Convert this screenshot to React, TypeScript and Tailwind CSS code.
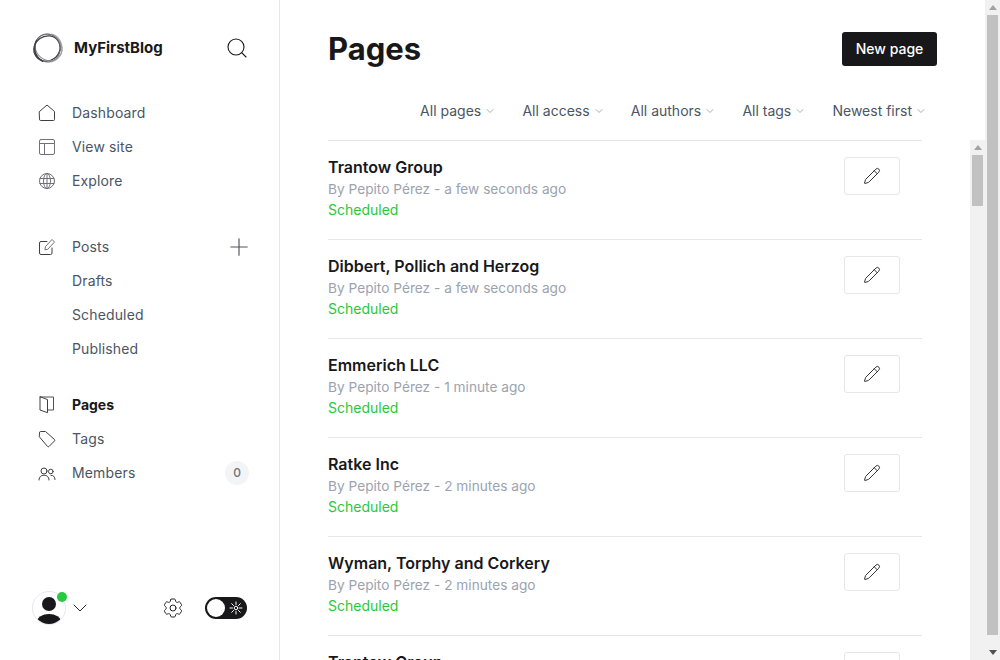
import React from "react";
import { Search, Plus, ChevronDown, Pencil } from "lucide-react";
import { HiOutlineCog6Tooth } from "react-icons/hi2";

const Svg = ({ children, size = 18 }: { children: React.ReactNode; size?: number }) => (
  <svg width={size} height={size} viewBox="0 0 18 18" fill="none" stroke="#3f3f46" strokeWidth="1" strokeLinejoin="round" strokeLinecap="round">
    {children}
  </svg>
);

const HomeIcon = () => <Svg><path d="M1.5 7.5 L9 1 L16.5 7.5 V15.5 a1 1 0 0 1 -1 1 H2.500 a1 1 0 0 1 -1 -1 Z" /></Svg>;
const LayoutIcon = () => <Svg><rect x="1.500" y="1.500" width="15" height="15" rx="1.500" stroke="#71717a" /><path d="M1.500 5.500 H16.500 M6.500 5.500 V16.500" stroke="#71717a" /></Svg>;
const GlobeIcon = () => <Svg><g stroke="#71717a"><circle cx="9" cy="9" r="7.500" /><ellipse cx="9" cy="9" rx="3.500" ry="7.500" /><path d="M2 6.500 H16 M2 11.500 H16 M9 1.500 V16.500" /></g></Svg>;
const PostIcon = () => <Svg><path d="M9 3.500 H3 a1.500 1.500 0 0 0 -1.500 1.500 V15 a1.500 1.500 0 0 0 1.500 1.500 H12.500 a1.500 1.500 0 0 0 1.500 -1.500 V10" /><path d="M7 11.500 L7.500 8.500 L14 1.500 L16.500 4 L10 11 Z" stroke="#71717a" /></Svg>;
const BookIcon = () => <Svg><path d="M2 1 H15.500 V14 H9.500" stroke="#52525b" /><path d="M2 1 V14 L9.500 16.700 V4 Z" /></Svg>;
const TagIcon = () => <Svg><path d="M1.500 2.500 a1 1 0 0 1 1 -1 H7.500 L16.500 9.500 a1 1 0 0 1 0 1.400 L11 16.500 a1 1 0 0 1 -1.400 0 L1.500 7 Z" /></Svg>;
const UsersIcon = () => <Svg><circle cx="6" cy="7" r="3" /><path d="M1 16 C1 12.500 3.500 11.300 6 11.300 C8.500 11.300 11 12.500 11 16" /><circle cx="12.800" cy="7.500" r="2.300" /><path d="M13 11.300 C15.500 11.300 17 12.800 17 15.500" /></Svg>;

const SunIcon = () => (
  <svg width="14" height="14" viewBox="0 0 14 14" fill="none" stroke="#ffffff" strokeWidth="1" strokeLinecap="round">
    <circle cx="7" cy="7" r="1.800" />
    <path d="M7 1 V3.500 M7 10.500 V13 M1 7 H3.500 M10.500 7 H13 M2.700 2.700 L4.500 4.500 M9.500 9.500 L11.300 11.300 M2.700 11.300 L4.500 9.500 M9.500 4.500 L11.300 2.700" />
  </svg>
);

const Logo = () => (
  <svg width="32" height="32" viewBox="0 0 32 32" fill="none">
    <ellipse cx="15" cy="16.500" rx="13.500" ry="12.300" transform="rotate(-35 15 16.500)" stroke="#3f3f46" strokeWidth="1.300" />
    <ellipse cx="16.500" cy="15.500" rx="14" ry="12.500" transform="rotate(40 16.500 15.500)" stroke="#8a8a90" strokeWidth="1" />
    <ellipse cx="15.500" cy="16" rx="14" ry="12.800" transform="rotate(85 15.500 16)" stroke="#6b6b70" strokeWidth="1" />
    <path d="M5 8 C0.500 15 2 25 11 29.500" stroke="#3f3f46" strokeWidth="1.600" />
    <path d="M19 2 C27 3.500 31.500 12 29.500 21 C27.500 26 24 28.500 19 30" stroke="#a1a1aa" strokeWidth="1.200" />
  </svg>
);

const NavItem = ({ icon, label, active, trailing }: { icon?: React.ReactNode; label: string; active?: boolean; trailing?: React.ReactNode }) => (
  <div className="flex h-[34px] items-center pl-[38px] pr-[30px]">
    <span className="flex w-[34px] shrink-0 items-center">{icon}</span>
    <span className={active ? "text-sm font-bold text-[#18181b]" : "text-sm tracking-[0.01em] text-[#4b5563]"}>{label}</span>
    {trailing && <span className="ml-auto flex items-center">{trailing}</span>}
  </div>
);

const Filter = ({ label }: { label: string }) => (
  <div className="flex items-center gap-[3px]">
    <span className="text-sm text-[#4b5563]">{label}</span>
    <ChevronDown size={12} strokeWidth={1.75} color="#9ca3af" />
  </div>
);

const Arrow = ({ up, color }: { up?: boolean; color: string }) => (
  <div className="flex h-[15px] w-[15px] shrink-0 items-center justify-center">
    <svg width="8" height="5" viewBox="0 0 8 5" fill={color}>
      <polygon points={up ? "4,0 8,5 0,5" : "0,0 8,0 4,5"} />
    </svg>
  </div>
);

const rows = [
  ["Trantow Group", "a few seconds ago"],
  ["Dibbert, Pollich and Herzog", "a few seconds ago"],
  ["Emmerich LLC", "1 minute ago"],
  ["Ratke Inc", "2 minutes ago"],
  ["Wyman, Torphy and Corkery", "2 minutes ago"],
  ["Trantow Group", "3 minutes ago"],
];

export default function App() {
  return (
    <div className="flex h-[660px] w-full overflow-hidden bg-white font-['Inter',sans-serif] text-[#18181b]">
      <aside className="flex h-[660px] w-[280px] shrink-0 flex-col border-r border-[#e5e7eb] pt-[32px]">
        <div className="flex h-[32px] items-center pl-[32px] pr-[30px]">
          <Logo />
          <span className="ml-[10px] text-[15px] font-bold text-[#18181b]">MyFirstBlog</span>
          <Search className="ml-auto" size={24} strokeWidth={1.1} color="#18181b" />
        </div>
        <nav className="mt-[32px] flex flex-col">
          <NavItem icon={<HomeIcon />} label="Dashboard" />
          <NavItem icon={<LayoutIcon />} label="View site" />
          <NavItem icon={<GlobeIcon />} label="Explore" />
        </nav>
        <nav className="mt-[32px] flex flex-col">
          <NavItem icon={<PostIcon />} label="Posts" trailing={<Plus className="mr-[-4px]" size={28} strokeWidth={1} color="#52525b" />} />
          <NavItem label="Drafts" />
          <NavItem label="Scheduled" />
          <NavItem label="Published" />
        </nav>
        <nav className="mt-[22px] flex flex-col">
          <NavItem icon={<BookIcon />} label="Pages" active />
          <NavItem icon={<TagIcon />} label="Tags" />
          <NavItem
            icon={<UsersIcon />}
            label="Members"
            trailing={<span className="flex h-[24px] w-[24px] items-center justify-center rounded-full bg-[#f3f4f6] text-xs font-medium text-[#71717a]">0</span>}
          />
        </nav>
        <div className="relative mt-auto mb-[35px] flex items-center pl-[32px] pr-[32px]">
          <div className="h-[34px] w-[34px] overflow-hidden rounded-full border border-[#e5e7eb]">
            <svg width="32" height="32" viewBox="0 0 32 32" fill="#18181b">
              <circle cx="16" cy="12" r="7" />
              <ellipse cx="16" cy="30" rx="12" ry="8" />
            </svg>
          </div>
          <span className="absolute left-[57px] top-px h-[10px] w-[10px] rounded-full bg-[#28c840]" />
          <ChevronDown className="ml-[2px]" size={24} strokeWidth={1} color="#27272a" />
          <HiOutlineCog6Tooth className="ml-[69px]" size={24} strokeWidth={1} color="#27272a" />
          <div className="ml-[20px] flex h-[22px] w-[42px] items-center justify-between rounded-full bg-[#18181b] pl-[2px] pr-[4px]">
            <span className="h-[18px] w-[18px] rounded-full bg-white" />
            <SunIcon />
          </div>
        </div>
      </aside>
      <main className="flex h-[660px] min-w-0 flex-1 flex-col">
        <div className="flex h-[66px] shrink-0 items-end justify-between px-[48px]">
          <h1 className="mb-[-1px] text-[31px] font-bold leading-[36px] text-[#18181b]">Pages</h1>
          <button className="flex h-[34px] w-[95px] items-center justify-center rounded-[3px] bg-[#18181b] text-sm font-medium text-white">New page</button>
        </div>
        <div className="flex h-[74px] shrink-0 items-center justify-end gap-[26.200px] pr-[58px] pt-[16px]">
          <Filter label="All pages" />
          <Filter label="All access" />
          <Filter label="All authors" />
          <Filter label="All tags" />
          <Filter label="Newest first" />
        </div>
        <div className="flex min-h-0 flex-1">
          <div className="min-w-0 flex-1 overflow-hidden px-[48px]">
            {rows.map(([name, time], i) => (
              <div key={i} className="flex h-[99px] items-start justify-between border-t border-[#e5e7eb] pr-[22px] pt-[15px]">
                <div>
                  <div className="text-base font-semibold leading-[22px] text-[#18181b]">{name}</div>
                  <div className="text-[13.700px] leading-[23px] text-[#9ca3af]">By Pepito Pérez - {time}</div>
                  <div className="mt-[-2px] text-sm leading-[21px] text-[#28c840]">Scheduled</div>
                </div>
                <button className="mt-px flex h-[38px] w-[56px] items-center justify-center rounded-[3px] border border-[#e5e7eb]">
                  <Pencil size={18} strokeWidth={1.25} color="#27272a" />
                </button>
              </div>
            ))}
          </div>
          <div className="flex w-[15px] shrink-0 flex-col bg-[#f1f1f1]">
            <Arrow up color="#a3a3a3" />
            <div className="mx-[2px] h-[51px] bg-[#c1c1c1]" />
          </div>
        </div>
      </main>
      <div className="flex h-[660px] w-[15px] shrink-0 flex-col bg-[#f1f1f1]">
        <Arrow up color="#a3a3a3" />
        <div className="mx-[2px] flex-1 bg-[#c1c1c1]" />
        <div className="h-[10px]" />
        <Arrow color="#505050" />
      </div>
    </div>
  );
}
